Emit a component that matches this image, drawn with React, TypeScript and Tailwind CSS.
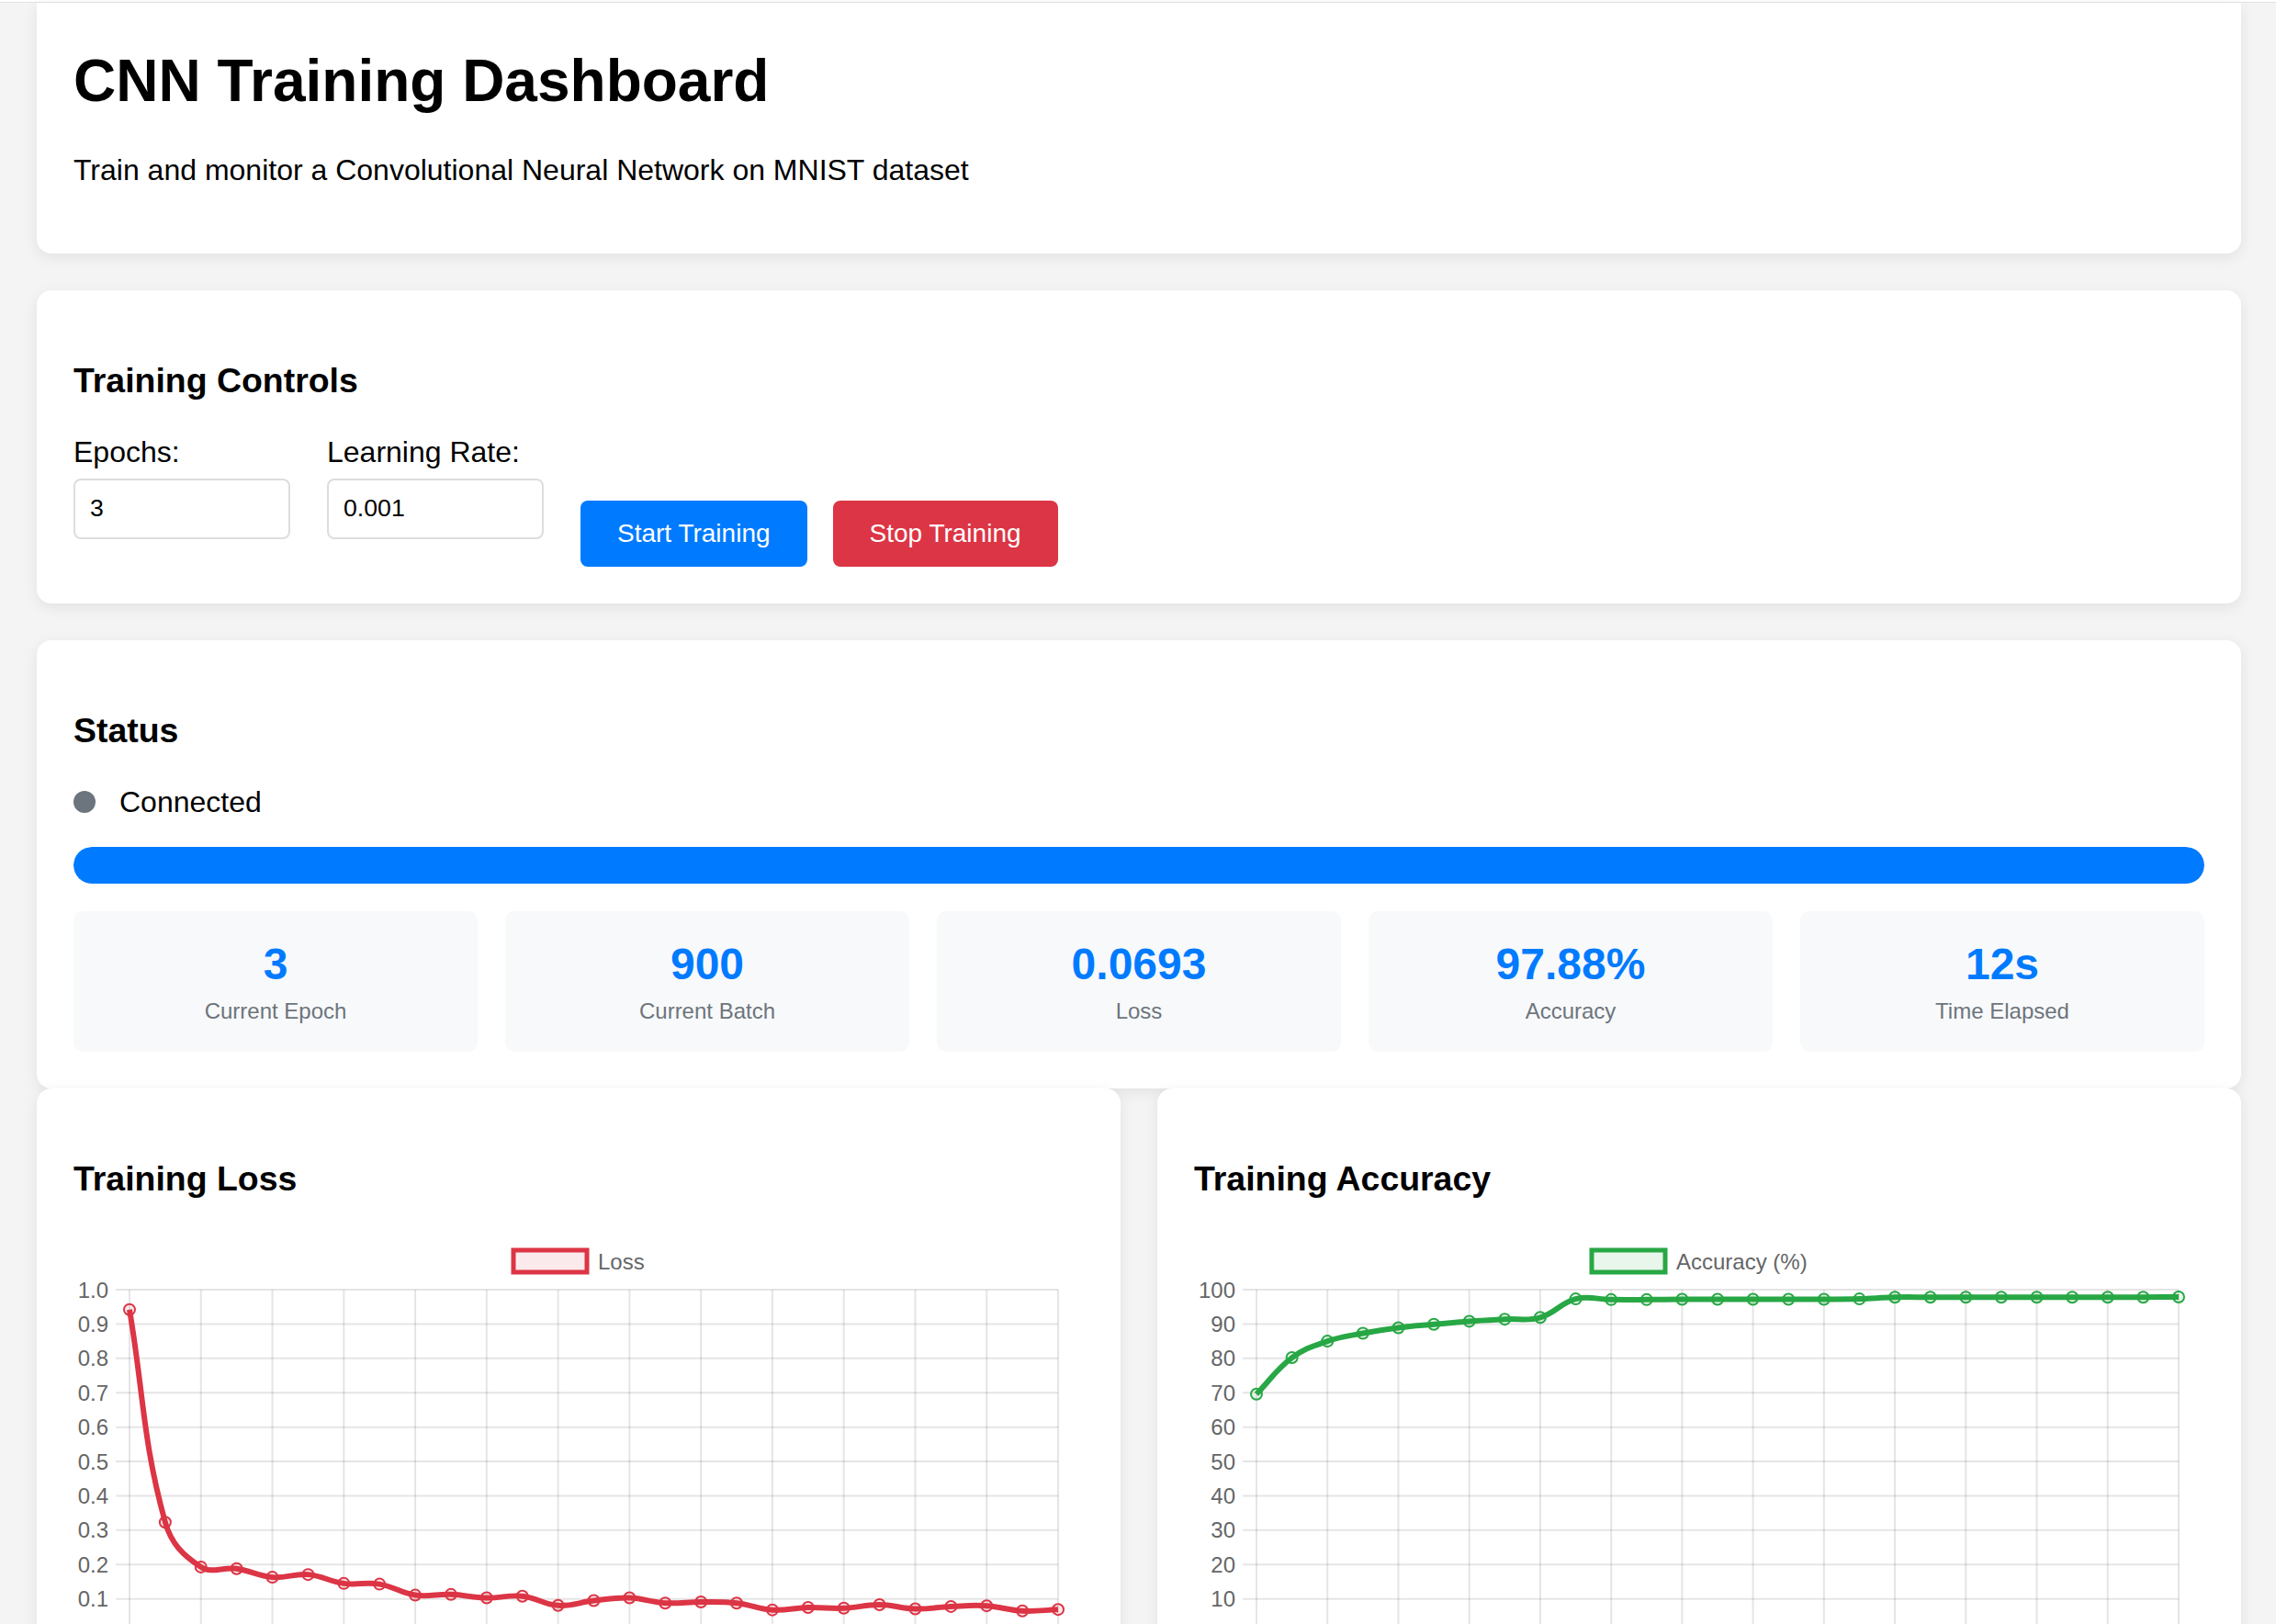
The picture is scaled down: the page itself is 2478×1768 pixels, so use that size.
import React from "react";

const lossData = [
  0.942, 0.323, 0.193, 0.188, 0.163, 0.171, 0.145, 0.143, 0.111, 0.113, 0.103,
  0.108, 0.081, 0.095, 0.103, 0.088, 0.091, 0.088, 0.068, 0.075, 0.073, 0.083,
  0.071, 0.078, 0.08, 0.065, 0.0693,
];

const accData = [
  69.6, 80.2, 85.0, 87.3, 88.9, 89.9, 90.8, 91.4, 91.9, 97.3, 97.1, 97.1, 97.2,
  97.2, 97.2, 97.2, 97.2, 97.3, 97.8, 97.8, 97.8, 97.8, 97.8, 97.8, 97.8, 97.8,
  97.88,
];

const stats = [
  { value: "3", label: "Current Epoch" },
  { value: "900", label: "Current Batch" },
  { value: "0.0693", label: "Loss" },
  { value: "97.88%", label: "Accuracy" },
  { value: "12s", label: "Time Elapsed" },
];

type Pt = { x: number; y: number };

// same control points chart.js uses for tension-based lines
const splinePath = (pts: Pt[], t: number) => {
  const ctrl = pts.map((cur, i) => {
    const prev = pts[i - 1] || cur;
    const next = pts[i + 1] || cur;
    const d01 = Math.hypot(cur.x - prev.x, cur.y - prev.y);
    const d12 = Math.hypot(next.x - cur.x, next.y - cur.y);
    let s01 = d01 / (d01 + d12);
    let s12 = d12 / (d01 + d12);
    if (isNaN(s01)) s01 = 0;
    if (isNaN(s12)) s12 = 0;
    const fa = t * s01;
    const fb = t * s12;
    return {
      prev: { x: cur.x - fa * (next.x - prev.x), y: cur.y - fa * (next.y - prev.y) },
      next: { x: cur.x + fb * (next.x - prev.x), y: cur.y + fb * (next.y - prev.y) },
    };
  });
  let d = `M${pts[0].x},${pts[0].y}`;
  for (let i = 1; i < pts.length; i++) {
    const a = ctrl[i - 1].next;
    const b = ctrl[i].prev;
    d += ` C${a.x},${a.y} ${b.x},${b.y} ${pts[i].x},${pts[i].y}`;
  }
  return d;
};

type ChartProps = {
  data: number[];
  max: number;
  step: number;
  fmt: (v: number) => string;
  color: string;
  fill: string;
  label: string;
  axisX: number;
  legendX: number;
};

const LineChart = ({ data, max, step, fmt, color, fill, label, axisX, legendX }: ChartProps) => {
  const top = 61;
  const h = 374.1;
  const right = 1072;
  const bottom = top + h;
  const gridStart = axisX - 15;
  const n = data.length;
  const xs = (i: number) => axisX + (i * (right - axisX)) / (n - 1);
  const ys = (v: number) => top + (1 - v / max) * h;
  const pts = data.map((v, i) => ({ x: xs(i), y: ys(v) }));
  const ticks = Array.from({ length: 11 }, (_, k) => k * step);

  return (
    <svg width={1100} height={470} className="block" style={{ fontFamily: "'Liberation Sans', Arial, sans-serif" }}>
      {/* legend */}
      <rect x={legendX} y={18} width={80} height={24} fill={fill} stroke={color} strokeWidth={5} />
      <text x={legendX + 92} y={30} fontSize={24} fill="#666" dominantBaseline="central">
        {label}
      </text>

      {/* grid */}
      {ticks.map((v) => (
        <g key={v}>
          <line x1={gridStart} x2={right} y1={ys(v)} y2={ys(v)} stroke="rgba(0,0,0,0.1)" strokeWidth={2} />
          <text x={gridStart - 8} y={ys(v)} fontSize={24} fill="#666" textAnchor="end" dominantBaseline="central">
            {fmt(v)}
          </text>
        </g>
      ))}
      {data.map((_, i) =>
        i % 2 === 0 ? (
          <line key={i} x1={xs(i)} x2={xs(i)} y1={top} y2={bottom + 15} stroke="rgba(0,0,0,0.1)" strokeWidth={2} />
        ) : null
      )}

      <path d={splinePath(pts, 0.4)} fill="none" stroke={color} strokeWidth={6} strokeLinejoin="round" />
      {pts.map((p, i) => (
        <circle key={i} cx={p.x} cy={p.y} r={6} fill={fill} stroke={color} strokeWidth={2} />
      ))}
    </svg>
  );
};

const Card = ({ className = "", children }: { className?: string; children: React.ReactNode }) => (
  <div className={`bg-white rounded-[16px] shadow-[0_4px_16px_rgba(0,0,0,0.08)] px-[40px] ${className}`}>
    {children}
  </div>
);

const SectionTitle = ({ children }: { children: React.ReactNode }) => (
  <h3 className="text-[37.44px] leading-[43px] font-bold my-[37.44px] text-black">{children}</h3>
);

export default function App() {
  return (
    <div className="min-h-screen bg-[#f4f4f4] font-['Liberation_Sans',Arial,sans-serif] text-black overflow-hidden">
      <div className="h-[2px] bg-white" />
      <div className="h-[1px] bg-[#e3e3e3]" />

      <div className="ml-[40px] w-[2400px] flex flex-col">
        {/* header */}
        <div className="bg-white rounded-b-[16px] shadow-[0_4px_16px_rgba(0,0,0,0.08)] px-[40px] pt-[48px] pb-[40px]">
          <h1 className="text-[64px] leading-[74px] font-bold mb-[42px]">CNN Training Dashboard</h1>
          <p className="text-[32px] leading-[37px] mb-[32px]">
            Train and monitor a Convolutional Neural Network on MNIST dataset
          </p>
        </div>

        {/* controls */}
        <Card className="mt-[40px] py-[40px]">
          <SectionTitle>Training Controls</SectionTitle>
          <div className="flex items-end">
            <div className="mb-[30px]">
              <label className="block text-[32px] leading-[37px] mb-[10px]">Epochs:</label>
              <input
                defaultValue="3"
                className="w-[236px] h-[66px] border-2 border-[#ddd] rounded-[8px] px-[16px] text-[26.67px] outline-none"
              />
            </div>
            <div className="mb-[30px] ml-[40px]">
              <label className="block text-[32px] leading-[37px] mb-[10px]">Learning Rate:</label>
              <input
                defaultValue="0.001"
                className="w-[236px] h-[66px] border-2 border-[#ddd] rounded-[8px] px-[16px] text-[26.67px] outline-none"
              />
            </div>
            <button className="ml-[40px] h-[72px] px-[40px] rounded-[8px] bg-[#007bff] text-white text-[28px] leading-[32px]">
              Start Training
            </button>
            <button className="ml-[28px] h-[72px] px-[40px] rounded-[8px] bg-[#dc3545] text-white text-[28px] leading-[32px]">
              Stop Training
            </button>
          </div>
        </Card>

        {/* status */}
        <Card className="mt-[40px] py-[40px]">
          <SectionTitle>Status</SectionTitle>
          <div className="flex items-center mb-[30px]">
            <span className="w-[24px] h-[24px] rounded-full bg-[#6c757d] mr-[26px]" />
            <span className="text-[32px] leading-[37px]">Connected</span>
          </div>
          <div className="h-[40px] rounded-full bg-[#e9ecef] overflow-hidden mb-[30px]">
            <div className="h-full w-full rounded-full bg-[#007bff]" />
          </div>
          <div className="grid grid-cols-5 gap-[30px]">
            {stats.map((s) => (
              <div key={s.label} className="bg-[#f8f9fa] rounded-[10px] pt-[30px] pb-[30px] text-center">
                <div className="text-[48px] leading-[55px] font-bold text-[#007bff] mb-[10px]">{s.value}</div>
                <div className="text-[24px] leading-[28px] text-[#6c757d]">{s.label}</div>
              </div>
            ))}
          </div>
        </Card>

        {/* charts */}
        <div className="grid grid-cols-2 gap-[40px]">
          <Card className="pt-[40px] pb-[40px]">
            <SectionTitle>Training Loss</SectionTitle>
            <LineChart
              data={lossData}
              max={1}
              step={0.1}
              fmt={(v) => (v === 0 ? "0" : v.toFixed(1))}
              color="#dc3545"
              fill="rgba(220,53,69,0.1)"
              label="Loss"
              axisX={61}
              legendX={479}
            />
          </Card>
          <Card className="pt-[40px] pb-[40px]">
            <SectionTitle>Training Accuracy</SectionTitle>
            <LineChart
              data={accData}
              max={100}
              step={10}
              fmt={(v) => String(Math.round(v))}
              color="#28a745"
              fill="rgba(40,167,69,0.1)"
              label="Accuracy (%)"
              axisX={68}
              legendX={433}
            />
          </Card>
        </div>
      </div>
    </div>
  );
}
